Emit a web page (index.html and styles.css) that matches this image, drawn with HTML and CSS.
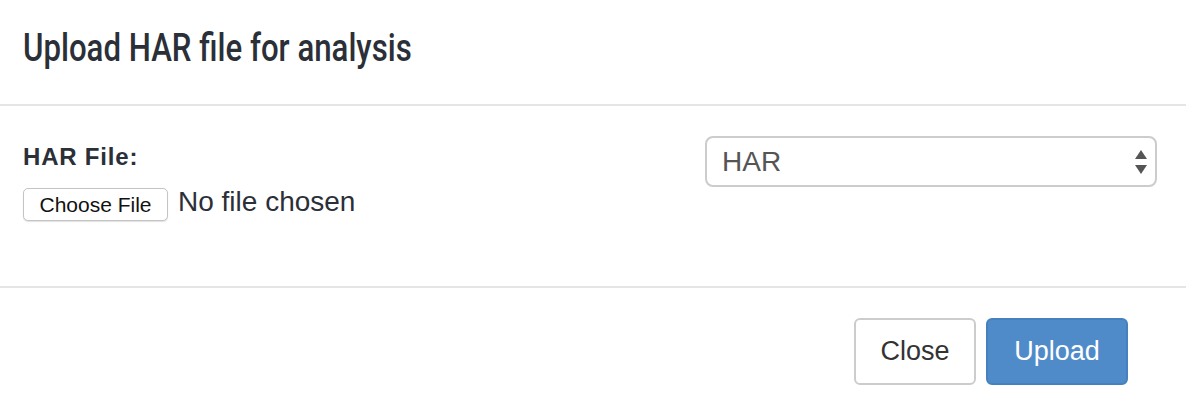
FILE: index.html
```html
<!DOCTYPE html>
<html lang="en">
<head>
  <meta charset="UTF-8" />
  <title>Upload HAR file</title>
  <link rel="stylesheet" href="styles.css">
</head>
<body>
  <div class="modal" role="dialog" aria-label="Upload HAR file for analysis">
    <div class="modal-header">
      <h4 class="modal-title">Upload HAR file for analysis</h4>
    </div>

    <div class="modal-body">
      <div class="file-group">
        <label class="file-label" for="har-file">HAR File:</label>
        <div class="file-input">
          <button type="button" class="file-btn" id="har-file">Choose File</button>
          <span class="file-name">No file chosen</span>
        </div>
      </div>

      <div class="select-wrap">
        <select class="format-select" aria-label="File format">
          <option>HAR</option>
        </select>
        <svg class="select-arrows" width="12" height="24" viewBox="0 0 12 24" aria-hidden="true">
          <path d="M6 0 L12 9 L0 9 Z" fill="#555" />
          <path d="M0 15 L12 15 L6 24 Z" fill="#555" />
        </svg>
      </div>
    </div>

    <div class="modal-footer">
      <button type="button" class="btn btn-default">Close</button>
      <button type="button" class="btn btn-primary">Upload</button>
    </div>
  </div>
</body>
</html>
```

FILE: styles.css
```css
:root {
  --text-dark: #2b2f38;
  --divider: #e5e5e5;
  --primary: #4f8bc9;
  --primary-border: #4681bf;
  --font-family: "Liberation Sans", Arial, sans-serif;
}

body {
  margin: 0;
  background: #fff;
  font-family: var(--font-family);
  color: var(--text-dark);
}

.modal {
  width: 1186px;
}

.modal-header {
  box-sizing: border-box;
  height: 106px;
  padding: 29px 23px 0;
  border-bottom: 2px solid var(--divider);
}

.modal-title {
  margin: 0;
  font-family: Roboto, sans-serif;
  font-weight: 500;
  font-size: 39px;
  line-height: 39px;
  color: var(--text-dark);
  transform: scaleX(0.8);
  transform-origin: left center;
  white-space: nowrap;
}

.modal-body {
  box-sizing: border-box;
  height: 182px;
  padding: 30px 29px 0 23px;
  display: flex;
  justify-content: space-between;
  align-items: flex-start;
  border-bottom: 2px solid var(--divider);
}

.file-group {
  display: flex;
  flex-direction: column;
  gap: 14px;
  padding-top: 7px;
}

.file-label {
  font-weight: bold;
  font-size: 24px;
  letter-spacing: 0.8px;
  line-height: 28px;
}

.file-input {
  display: flex;
  align-items: center;
  gap: 10px;
}

.file-btn {
  box-sizing: border-box;
  width: 145px;
  height: 33px;
  padding: 0;
  margin-top: 3px;
  font-family: var(--font-family);
  font-size: 21px;
  color: #111;
  background: #fff;
  border: 1px solid #c4c4c4;
  border-radius: 5px;
  box-shadow: 0 1px 1px rgba(0,0,0,0.12);
}

.file-name {
  font-size: 28px;
  margin-top: -3px;
  color: var(--text-dark);
}

.select-wrap {
  position: relative;
  width: 452px;
}

.format-select {
  box-sizing: border-box;
  width: 100%;
  height: 51px;
  padding: 0 15px;
  appearance: none;
  -webkit-appearance: none;
  font-family: var(--font-family);
  font-size: 28px;
  color: #555;
  background: #fff;
  border: 2px solid #ccc;
  border-radius: 8px;
  outline: none;
}

.select-arrows {
  position: absolute;
  right: 10px;
  top: 14px;
  pointer-events: none;
}

.modal-footer {
  display: flex;
  justify-content: flex-end;
  gap: 10px;
  padding: 30px 58px 0 0;
}

.btn {
  box-sizing: border-box;
  height: 67px;
  font-family: var(--font-family);
  font-size: 27px;
  border-radius: 6px;
  cursor: pointer;
}

.btn-default {
  width: 122px;
  color: #333;
  background: #fff;
  border: 2px solid #ccc;
}

.btn-primary {
  width: 142px;
  color: #fff;
  background: var(--primary);
  border: 2px solid var(--primary-border);
}
```
